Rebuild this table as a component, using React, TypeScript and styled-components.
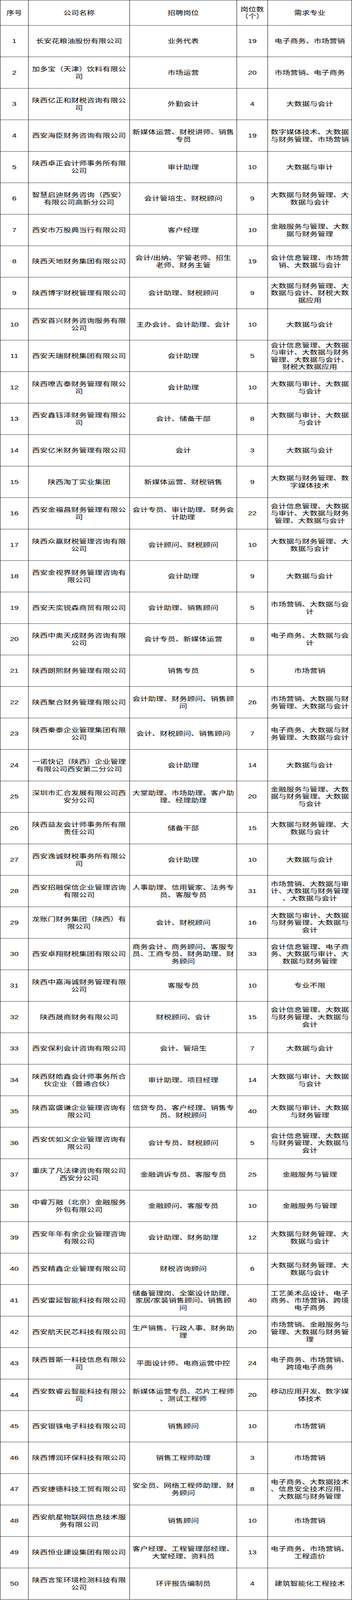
import React from "react";
import styled, { createGlobalStyle } from "styled-components";

// The sheet is laid out at its natural size (header 85px, rows 106px),
// then squeezed vertically so that all 50 rows fit the ~4096px tall photo.
const FRAME_HEIGHT = 4096;
const SHEET_HEIGHT = 5386;

const GlobalStyle = createGlobalStyle`
  html, body {
    margin: 0;
    padding: 0;
    background: #ffffff;
  }
  body {
    font-family: "Liberation Sans", "Noto Sans CJK SC", sans-serif;
    color: #000000;
  }
`;

const Frame = styled.div`
  width: 900px;
  height: ${FRAME_HEIGHT}px;
  overflow: hidden;
  background: #ffffff;
`;

const Sheet = styled.div`
  width: 900px;
  transform-origin: 0 0;
  transform: scaleY(${(FRAME_HEIGHT - 1) / SHEET_HEIGHT});
`;

const Table = styled.table`
  width: 899px;
  table-layout: fixed;
  border-collapse: collapse;
  border-spacing: 0;
  font-family: "Liberation Sans", "Noto Sans CJK SC", sans-serif;
  font-size: 20px;
  line-height: 24.5px;
  color: #000000;
`;

const HeadCell = styled.th`
  box-sizing: border-box;
  height: 85px;
  border: 1px solid #000000;
  padding: 0 5px;
  font-size: 20px;
  line-height: 24.5px;
  font-weight: normal;
  text-align: center;
  vertical-align: middle;
  line-break: anywhere;
`;

const Cell = styled.td`
  box-sizing: border-box;
  height: 106px;
  border: 1px solid #000000;
  padding: 0 5px;
  font-size: 20px;
  line-height: 24.5px;
  text-align: center;
  vertical-align: middle;
  line-break: anywhere;
`;

type Job = [string, string, number, string];

const jobs: Job[] = [
  ["长安花粮油股份有限公司", "业务代表", 19, "电子商务、市场营销"],
  ["加多宝（天津）饮料有限公司", "市场运营", 20, "市场营销、电子商务"],
  ["陕西亿正和财税咨询有限公司", "外勤会计", 4, "大数据与会计"],
  ["西安海臣财务咨询有限公司", "新媒体运营、财税讲师、销售专员", 19, "数字媒体技术、大数据与财务管理、市场营销"],
  ["陕西卓正会计师事务所有限公司", "审计助理", 10, "大数据与审计"],
  ["智慧启迪财务咨询（西安）有限公司高新分公司", "会计管培生、财税顾问", 9, "大数据与财务管理、大数据与会计"],
  ["西安市万股典当行有限公司", "客户经理", 10, "金融服务与管理、大数据与财务管理"],
  ["陕西天地财务集团有限公司", "会计/出纳、学管老师、招生老师、财务主管", 19, "会计信息管理、市场营销、大数据与会计"],
  ["陕西博宇财税管理有限公司", "会计助理、财税顾问", 9, "大数据与财务管理、大数据与会计、财税大数据应用"],
  ["西安首兴财务咨询服务有限公司", "主办会计、会计助理、会计", 10, "大数据与会计"],
  ["西安天瑞财税集团有限公司", "会计助理", 5, "会计信息管理、大数据与审计、大数据与财务管理、大数据与会计、财税大数据应用"],
  ["陕西嘹吉泰财务管理有限公司", "会计助理", 10, "大数据与审计、大数据与会计"],
  ["西安鑫钰泽财务管理有限公司", "会计、储备干部", 8, "大数据与审计、大数据与会计"],
  ["西安亿米财务管理有限公司", "会计", 3, "大数据与会计"],
  ["陕西淘丁实业集团", "新媒体运营、财税销售", 9, "大数据与财务管理、数字媒体技术"],
  ["西安金福昌财务管理有限公司", "会计专员、审计助理、财务会计助理", 22, "会计信息管理、大数据与审计、大数据与财务管理、大数据与会计"],
  ["陕西众赢财税管理咨询有限公司", "会计顾问、财税顾问", 10, "大数据与财务管理、大数据与会计"],
  ["西安金视界财务管理咨询有限公司", "会计助理", 9, "大数据与会计"],
  ["西安天奕锐森商贸有限公司", "会计助理、销售顾问", 5, "市场营销、大数据与会计"],
  ["陕西中奥天成财务咨询有限公司", "会计专员、新媒体运营", 8, "电子商务、大数据与会计"],
  ["陕西朗熙财务管理有限公司", "销售专员", 5, "市场营销"],
  ["陕西聚合财务管理有限公司", "会计助理、财务顾问、销售顾问", 26, "市场营销、大数据与财务管理、大数据与会计"],
  ["陕西秦泰企业管理集团有限公司", "会计、财税顾问、销售顾问", 7, "电子商务、大数据与财务管理、大数据与会计"],
  ["一诺快记（陕西）企业管理有限公司西安第二分公司", "会计助理", 14, "大数据与会计"],
  ["深圳市汇合发展有限公司西安分公司", "大堂助理、市场助理、客户助理、经理助理", 20, "金融服务与管理、大数据与财务管理、大数据与会计"],
  ["陕西益友会计师事务所有限责任公司", "储备干部", 15, "大数据与财务管理、大数据与会计"],
  ["西安逸诚财税事务所有限公司", "会计助理", 10, "大数据与会计"],
  ["西安招融保信企业管理咨询有限公司", "人事助理、信用管家、法务专员、客服专员", 31, "市场营销、大数据与审计、大数据与财务管理、大数据与会计"],
  ["龙账门财务集团（陕西）有限公司", "会计、财税顾问", 16, "大数据与审计、大数据与财务管理、大数据与会计"],
  ["西安卓翔财税集团有限公司", "商务会计、商务顾问、客服专员、工商专员、财务助理、财务顾问", 33, "会计信息管理、电子商务、大数据与审计、大数据与财务管理"],
  ["陕西中嘉海诚财务管理有限公司", "客服专员", 10, "专业不限"],
  ["陕西晟商财务有限公司", "财税顾问、会计", 15, "会计信息管理、大数据与财务管理、大数据与会计"],
  ["西安保利会计咨询有限公司", "会计、管培生", 7, "大数据与会计"],
  ["陕西财皓鑫会计师事务所合伙企业（普通合伙）", "审计助理、项目经理", 14, "大数据与审计、大数据与会计"],
  ["陕西富盛谦企业管理咨询有限公司", "信贷专员、客户经理、销售专员、财税顾问", 40, "大数据与审计、大数据与财务管理"],
  ["西安优如义企业管理咨询有限公司", "会计专员、财税顾问", 5, "会计信息管理、大数据与财务管理、大数据与会计"],
  ["重庆了凡法律咨询有限公司西安分公司", "金融调诉专员、客服专员", 25, "金融服务与管理"],
  ["中睿万融（北京）金融服务外包有限公司", "金融顾问、客服专员", 10, "金融服务与管理"],
  ["西安年年有余企业管理咨询有限公司", "会计助理、财务助理", 12, "大数据与财务管理、大数据与会计"],
  ["西安精鑫企业管理有限公司", "财税咨询顾问", 6, "大数据与财务管理、大数据与会计"],
  ["西安雷延智能科技有限公司", "储备管理岗、全案设计助理、家居/家装销售顾问、销售顾问", 40, "工艺美术品设计、电子商务、市场营销、跨境电子商务"],
  ["西安航天民芯科技有限公司", "生产销售、行政人事、财务助理", 20, "市场营销、金融服务与管理、大数据与财务管理"],
  ["陕西普斯一科技信息有限公司", "平面设计师、电商运营中控", 24, "电子商务、市场营销、跨境电子商务"],
  ["西安数睿云智能科技有限公司", "新媒体运营专员、芯片工程师、测试工程师", 20, "移动应用开发、数字媒体技术"],
  ["西安银铢电子科技有限公司", "销售顾问", 10, "市场营销"],
  ["陕西博润环保科技有限公司", "销售工程师助理", 3, "市场营销"],
  ["西安捷德科技工贸有限公司", "安全员、网络工程师助理、财务顾问", 8, "电子商务、大数据技术、信息安全技术应用、大数据与财务管理"],
  ["西安航星物联网信息技术服务有限公司", "销售顾问", 10, "市场营销"],
  ["陕西恒业建设集团有限公司", "客户经理、工程管理部经理、大堂经理、资料员", 13, "电子商务、市场营销、工程造价"],
  ["陕西言笙环境检测科技有限公司", "环评报告编制员", 4, "建筑智能化工程技术"],
];

export default function App() {
  return (
    <>
      <GlobalStyle />
      <Frame>
        <Sheet>
          <Table>
            <colgroup>
              <col style={{ width: 72 }} />
              <col style={{ width: 259 }} />
              <col style={{ width: 274 }} />
              <col style={{ width: 79 }} />
              <col style={{ width: 215 }} />
            </colgroup>
            <thead>
              <tr>
                <HeadCell>序号</HeadCell>
                <HeadCell>公司名称</HeadCell>
                <HeadCell>招聘岗位</HeadCell>
                <HeadCell>岗位数（个）</HeadCell>
                <HeadCell>需求专业</HeadCell>
              </tr>
            </thead>
            <tbody>
              {jobs.map(([company, post, count, major], i) => (
                <tr key={i}>
                  <Cell>{i + 1}</Cell>
                  <Cell>{company}</Cell>
                  <Cell>{post}</Cell>
                  <Cell>{count}</Cell>
                  <Cell>{major}</Cell>
                </tr>
              ))}
            </tbody>
          </Table>
        </Sheet>
      </Frame>
    </>
  );
}
